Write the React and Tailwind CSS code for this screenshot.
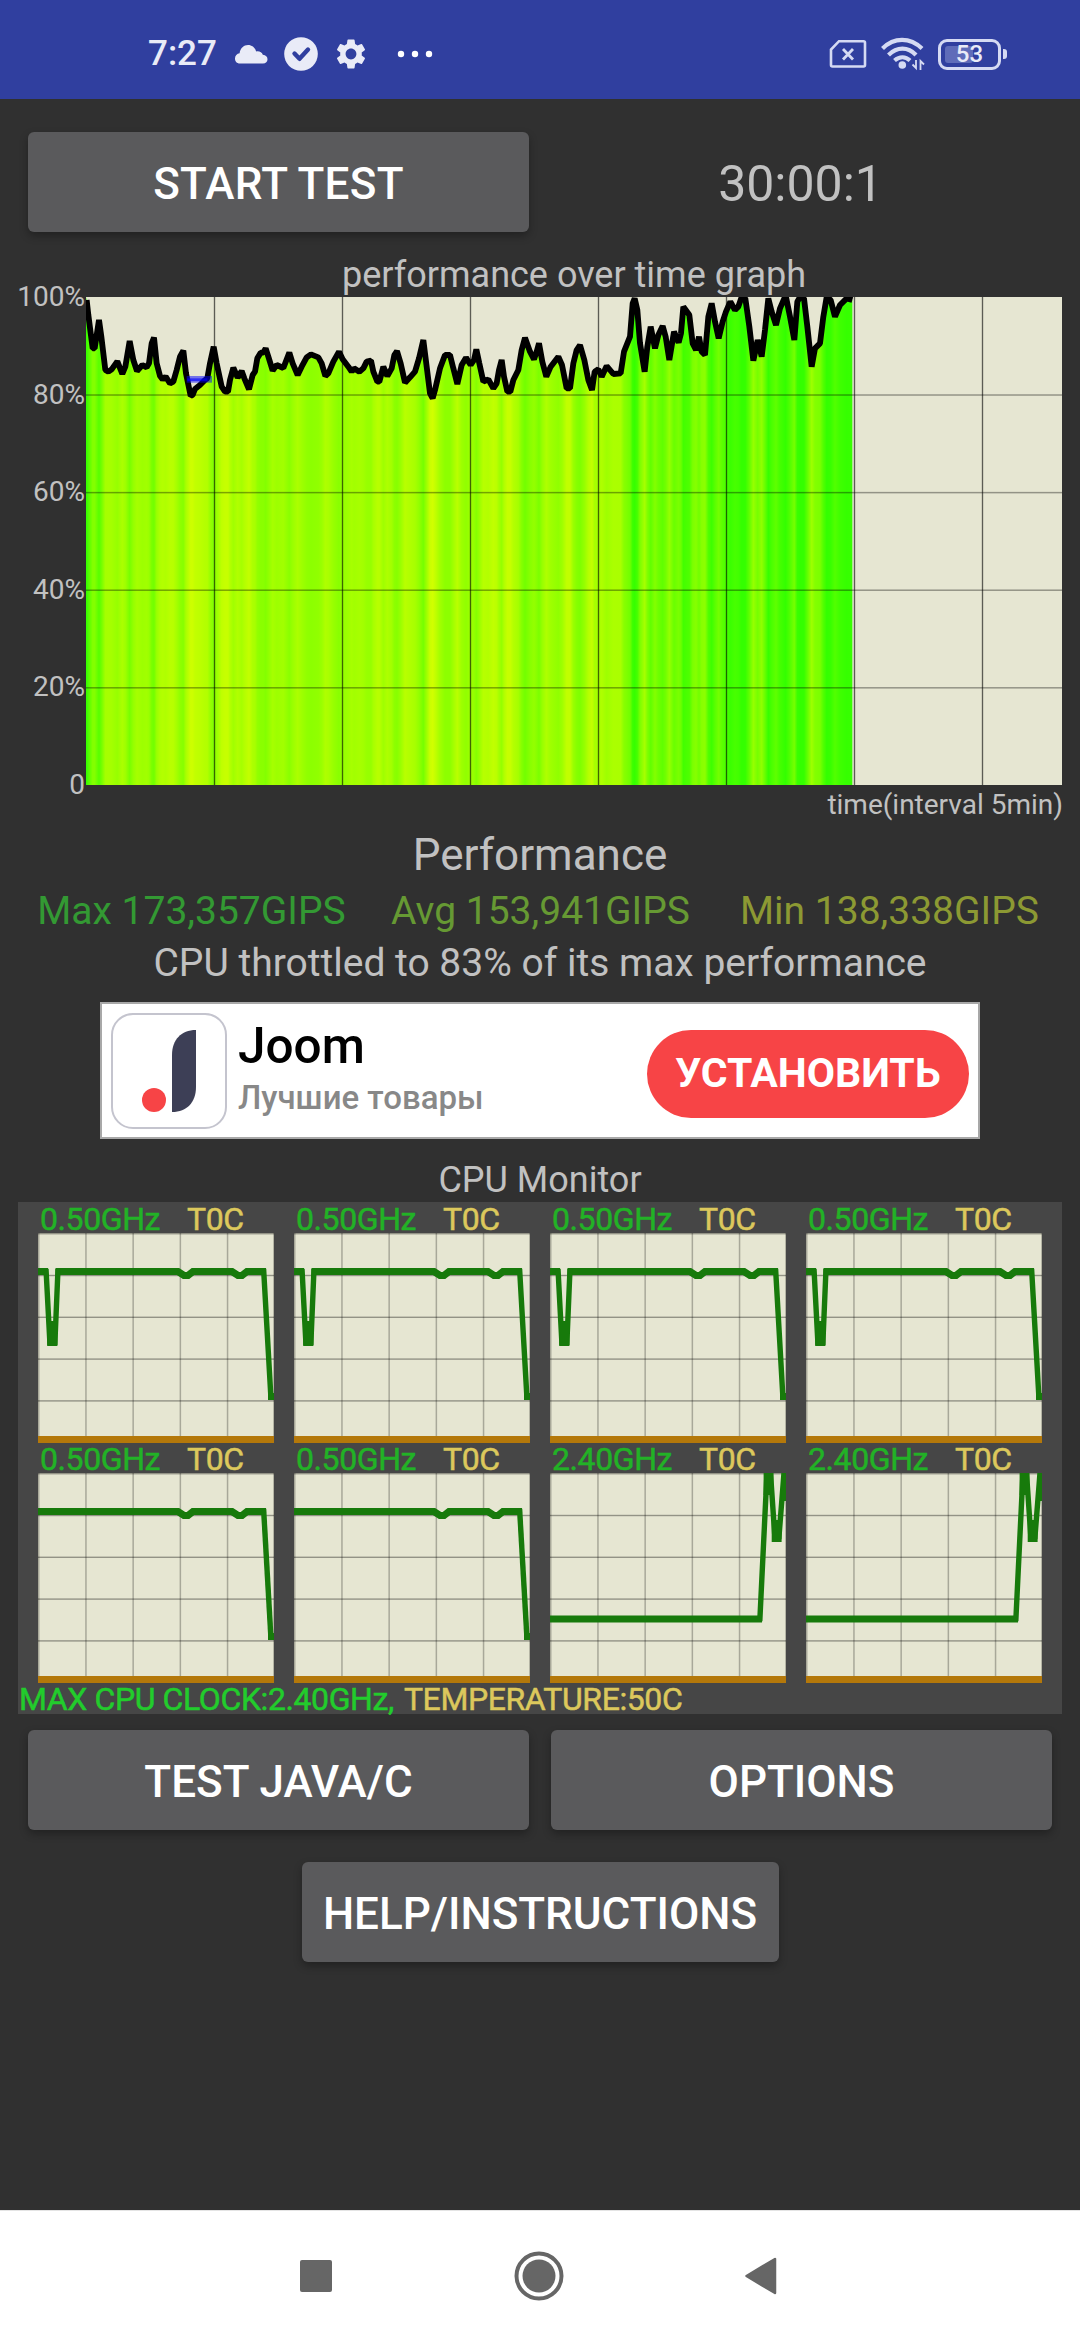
import React from 'react';
import { MdSettings } from 'react-icons/md';

// Performance samples, three units per pixel on both axes.
const SAMPLES = `2,9 7,54 20,154 26,154 39,69 46,119 58,219 67,224 77,217 94,193 109,231 118,209 131,132 142,189 153,222
169,204 182,211 189,199 197,139 204,122 212,199 222,237 230,247 239,239 252,259 262,254 272,219 282,179 292,161 300,229
314,297 320,294 327,276 342,264 357,249 364,244 372,199 383,149 392,199 407,269 417,284 426,284 432,249 442,212 455,242
467,222 475,244 489,277 500,234 507,224 514,184 524,167 532,167 539,154 547,179 560,221 572,204 592,213 610,167 620,199
635,234 647,209 662,181 675,172 697,181 707,199 718,237 727,229 742,194 759,164 770,187 787,209 797,224 804,214 820,224
832,214 842,194 855,191 862,224 874,254 880,254 892,209 904,237 917,214 925,174 933,162 944,199 957,257 972,241 987,224
999,184 1012,129 1022,209 1032,289 1040,304 1047,279 1062,214 1077,174 1092,174 1102,214 1114,261 1127,204 1140,182
1154,204 1164,189 1171,157 1180,199 1192,254 1207,247 1222,274 1232,259 1239,219 1247,189 1254,239 1264,284 1273,284
1282,249 1297,219 1307,159 1317,122 1332,164 1344,187 1352,164 1359,139 1369,194 1381,239 1394,209 1417,179 1428,204
1442,274 1452,274 1462,199 1472,159 1482,144 1495,189 1507,249 1518,279 1526,224 1537,217 1547,239 1562,207 1582,231
1604,229 1614,164 1632,119 1640,19 1646,4 1654,39 1662,139 1676,224 1684,149 1694,89 1707,154 1717,114 1730,87 1739,119
1750,189 1764,104 1778,137 1785,109 1792,29 1810,54 1820,139 1830,159 1839,119 1847,164 1857,174 1867,59 1877,19 1887,74
1898,124 1910,74 1920,44 1933,14 1947,39 1957,29 1967,0 1978,4 1990,89 2002,191 2015,129 2027,179 2037,99 2047,4 2057,44
2070,84 2082,34 2099,-5 2112,59 2125,129 2134,14 2142,0 2154,4 2164,89 2177,209 2187,154 2202,139 2212,59 2222,0 2234,9
2247,59 2262,24 2282,4 2299,9`
  .split(/\s+/)
  .map((pair) => pair.split(',').map(Number));

const END_X = 2299;

function heat(y) {
  const red = Math.round(51 + (Math.max(y, 0) / 1464) * 100 * 7.6);
  return `rgb(${Math.min(red, 255)},255,0)`;
}

function PerformanceChart() {
  const line = SAMPLES.map((p) => p.join(',')).join(' ');

  return (
    <svg className="block w-[976px] h-[488px] bg-[#e6e6d2]" viewBox="0 0 2928 1464">
      <defs>
        <linearGradient id="heat" gradientUnits="userSpaceOnUse" x1="0" y1="0" x2={END_X} y2="0">
          {SAMPLES.map(([x, y]) => (
            <stop key={x} offset={x / END_X} stopColor={heat(y)} />
          ))}
        </linearGradient>
      </defs>
      <polygon points={`0,0 ${line} ${END_X},1464 0,1464`} fill="url(#heat)" />
      <polyline points={line} fill="none" stroke="#000" strokeWidth="17.5" strokeLinejoin="bevel" />
      <rect x="302" y="237" width="76" height="20" fill="#0000ff" fillOpacity="0.5" />
      <rect x="304" y="244" width="60" height="8" fill="#0000ff" fillOpacity="0.6" />
      {[1, 2, 3, 4].map((i) => (
        <rect key={i} x="0" y={i * 292.8 - 1} width="2928" height="4.5" fillOpacity="0.36" />
      ))}
      {[1, 2, 3, 4, 5, 6, 7].map((i) => (
        <rect key={i} x={i * 384 - 0.5} y="0" width="4" height="1464" fillOpacity="0.6" />
      ))}
    </svg>
  );
}

const AXIS = ['100%', '80%', '60%', '40%', '20%', '0'];

const FLAT_TAIL = 'H140 L146,42.5 H150 L155,38.5 H194 L200,42.5 H204 L209,38.5 H228';

// "flat" strokes are drawn heavier than the steep ones.
const TRACES = {
  dip: {
    flat: `M0,38.5 H10 M17.5,38.5 ${FLAT_TAIL} M230,163.5 H236`,
    steep: 'M8,36 L12,112 M16.8,112 L20,36 M225.6,36 L233,166',
    blocks: [[9.2, 88, 10.2, 25]],
  },
  high: {
    flat: `M0,38.5 ${FLAT_TAIL} M230,163.5 H236`,
    steep: 'M225.6,36 L233,166',
    blocks: [],
  },
  burst: {
    flat: 'M0,146 H212',
    steep: 'M209.8,148 L217,0 M220.5,0 L225,66 M228.8,66 L234,0',
    blocks: [[213.6, 0, 9.8, 22], [221.7, 47, 9.9, 22], [231.8, 0, 4.2, 28]],
  },
};

const CORES = [
  { clock: '0.50GHz', trace: 'dip' },
  { clock: '0.50GHz', trace: 'dip' },
  { clock: '0.50GHz', trace: 'dip' },
  { clock: '0.50GHz', trace: 'dip' },
  { clock: '0.50GHz', trace: 'high' },
  { clock: '0.50GHz', trace: 'high' },
  { clock: '2.40GHz', trace: 'burst' },
  { clock: '2.40GHz', trace: 'burst' },
];

function Core({ clock, trace }) {
  const { flat, steep, blocks } = TRACES[trace];

  return (
    <div className="w-[236px] h-60">
      <div className="h-[31px] pt-[2px] pl-[2px] flex text-[32px] leading-[31px] tracking-[-0.4px] [-webkit-text-stroke:0.5px]">
        <span className="w-[147px] text-[#22b226]">{clock}</span>
        <span className="text-[#dcc85c]">T0C</span>
      </div>
      <svg className="block w-[236px] h-[210px] bg-[#e6e6d2]" viewBox="0 0 236 210">
        {[0, 47.2, 94.4, 141.6, 188.8, 235.2].map((x) => (
          <rect key={x} x={x} y="0" width="1.5" height="210" fill="#000" fillOpacity="0.27" />
        ))}
        {[0, 41.8, 83.6, 125.4, 167.2].map((y) => (
          <rect key={y} x="0" y={y} width="236" height="1.4" fill="#000" fillOpacity="0.36" />
        ))}
        <rect x="0" y="203" width="236" height="7" fill="#b4780a" />
        <path d={flat} fill="none" stroke="#177a0b" strokeWidth="7.2" />
        <path d={steep} fill="none" stroke="#177a0b" strokeWidth="5.4" />
        {blocks.map(([x, y, w, h]) => (
          <rect key={x} x={x} y={y} width={w} height={h} fill="#177a0b" />
        ))}
      </svg>
    </div>
  );
}

function StatusBar() {
  return (
    <div className="h-[99px] bg-[#303f9f] flex items-center pl-[148px] pr-[73px] text-[#e9ebf7] shrink-0">
      <div className="h-[34px] mt-[8px] flex items-center flex-1">
        <span className="w-[72px] text-[35px] leading-[34px] font-medium">7:27</span>
        <svg className="ml-[14px] w-[34px] h-[20px]" viewBox="0 0 34 20">
          <path d="M6 19.500C2.600 19.500 1 17.200 1 14.500c0-3 2-5 4.600-5.300C6.400 4 9.800 1 14 1c4 0 7 2.500 8.200 6.400 3.200-.6 5.800 1 6.600 3.400 3 .3 4.700 2 4.700 4.500 0 2.600-1.700 4.200-4.500 4.200z" fill="currentColor" />
        </svg>
        <svg className="ml-[16px] w-[34px] h-[34px]" viewBox="0 0 34 34">
          <circle cx="17" cy="17" r="16.800" fill="currentColor" />
          <path d="M10.500 16.500l5 5.300 8.500-9.300" fill="none" stroke="#303f9f" strokeWidth="4.400" strokeLinecap="round" strokeLinejoin="round" />
        </svg>
        <MdSettings className="ml-[15px] w-[36px] h-[36px]" />
        <svg className="ml-[28px] w-[36px] h-[8px]" viewBox="0 0 36 8">
          <circle cx="4" cy="4" r="3.200" fill="#fff" />
          <circle cx="18" cy="4" r="3.200" fill="#fff" />
          <circle cx="32" cy="4" r="3.200" fill="#fff" />
        </svg>
      </div>
      <div className="mt-[9px] flex items-center text-[#d5daf3]">
        <svg className="w-[38px] h-[30px]" viewBox="0 0 38 30">
          <path d="M10 2.200H34.500a1.500 1.500 0 0 1 1.500 1.500V26a1.500 1.500 0 0 1-1.500 1.500H3.500A1.500 1.500 0 0 1 2 26V10.500z" fill="none" stroke="currentColor" strokeWidth="2.600" />
          <path d="M14 10l10 10.500M24 10l-10 10.500" stroke="currentColor" strokeWidth="2.800" />
        </svg>
        <svg className="ml-[14px] w-[44px] h-[34px]" viewBox="0 0 44 34">
          <g fill="none" stroke="currentColor" strokeWidth="4.200">
            <path d="M1.500 11.500C13 0 29 0 41 11.500" />
            <path d="M7.500 18C16 9.600 27 9.600 35 18" />
            <path d="M13.500 23.500c5-4.300 11-4.300 15.500 0" />
          </g>
          <circle cx="21.300" cy="28" r="3.800" fill="currentColor" />
          <path d="M35 23v8l-3.500-3.500M39.500 33v-9l3.500 3.500" fill="none" stroke="currentColor" strokeWidth="1.800" />
        </svg>
        <div className="ml-[13px] w-[63px] h-[31px] p-[4px] border-[3.5px] border-[#d5daf3] rounded-[9px] relative">
          <div className="w-[28px] h-full bg-[#5f6cb9] rounded-[3px]" />
          <span className="absolute inset-0 text-center text-[24px] leading-[25px] font-medium text-[#e9ebf7]">53</span>
        </div>
        <div className="ml-[2px] w-[4px] h-[10px] bg-[#d5daf3] rounded-r-[3px]" />
      </div>
    </div>
  );
}

function Button({ className, children }) {
  return (
    <button
      className={`h-[100px] pt-[3px] bg-[#5a5a5c] rounded-[6px] text-white text-[44px] font-medium whitespace-nowrap shadow-[0_4px_8px_rgba(0,0,0,0.3)] ${className}`}
    >
      {children}
    </button>
  );
}

function AdBanner() {
  return (
    <div className="mt-3 mx-auto w-[880px] h-[137px] bg-white border-2 border-[#a8a8a8] flex items-center pl-[9px] pr-[9px]">
      <svg className="w-[116px] h-[116px] shrink-0" viewBox="0 0 116 116">
        <rect x="1" y="1" width="114" height="114" rx="21" fill="#fff" stroke="#c4c4ce" strokeWidth="2" />
        <path d="M85 17v57c0 15-9 25-24 25V42c0-15 9-25 24-25z" fill="#3d3f56" />
        <circle cx="43" cy="87" r="12" fill="#f74446" />
      </svg>
      <div className="ml-[11px] mb-[4px] flex-1 flex flex-col">
        <span className="text-[49.5px] leading-[56px] font-medium text-black">Joom</span>
        <span className="mt-[2px] text-[33px] leading-[44px] font-medium text-[#888888]">Лучшие товары</span>
      </div>
      <div className="w-[322px] h-[88px] mt-[6px] rounded-full bg-[#f74446] text-white text-[41px] leading-[86px] font-bold text-center">
        УСТАНОВИТЬ
      </div>
    </div>
  );
}

function NavBar() {
  return (
    <div className="mt-auto h-[130px] bg-white border-t border-[#e4e4e4] flex items-center text-[#666666] shrink-0">
      <div className="ml-[300px] w-8 h-8 bg-[#666666] rounded-[2px]" />
      <svg className="ml-[182px] w-[50px] h-[50px]" viewBox="0 0 50 50">
        <circle cx="25" cy="25" r="22.500" fill="none" stroke="currentColor" strokeWidth="4" />
        <circle cx="25" cy="25" r="16.500" fill="currentColor" />
      </svg>
      <svg className="ml-[180px] w-[33px] h-[38px]" viewBox="0 0 33 38">
        <path d="M2.500 19L31 2v34z" fill="currentColor" stroke="currentColor" strokeWidth="2.500" strokeLinejoin="round" />
      </svg>
    </div>
  );
}

export default function App() {
  return (
    <div className="w-[1080px] h-[2340px] bg-[#303030] text-[#c1c1c1] font-[Roboto,sans-serif] flex flex-col overflow-hidden">
      <StatusBar />

      <div className="mt-[33px] h-[100px] px-7 flex items-center">
        <Button className="w-[501px] tracking-[0.3px]">START TEST</Button>
        <span className="flex-1 pt-[3px] pl-[20px] text-center text-[50px] leading-[100px]">30:00:1</span>
      </div>

      {/* Performance graph */}
      <div className="mt-[21px] h-[44px] pl-[68px] text-center text-[36px] leading-[44px]">performance over time graph</div>
      <div className="flex">
        <div className="w-[86px] h-[488px] pr-[1px] flex flex-col justify-between text-right text-[28px]">
          {AXIS.map((label) => (
            <div key={label} className="h-0 leading-[0px]">{label}</div>
          ))}
        </div>
        <PerformanceChart />
      </div>
      <div className="h-10 pr-[17px] text-right text-[28px] leading-[40px]">time(interval 5min)</div>

      {/* Results */}
      <div className="h-[60px] text-center text-[44px] leading-[60px]">Performance</div>
      <div className="h-[52px] pl-[17px] pr-[16px] grid grid-cols-3 text-center text-[39px] leading-[52px]">
        <span className="text-[#339933]">Max 173,357GIPS</span>
        <span className="text-[#669933]">Avg 153,941GIPS</span>
        <span className="text-[#8c9933]">Min 138,338GIPS</span>
      </div>
      <div className="h-[53px] text-center text-[39px] leading-[53px]">CPU throttled to 83% of its max performance</div>

      <AdBanner />

      {/* CPU monitor */}
      <div className="mt-5 h-[43px] text-center text-[36px] leading-[43px]">CPU Monitor</div>
      <div className="mx-[18px] h-[512px] bg-[#464646]">
        <div className="pl-5 grid w-[1044px] [grid-template-columns:repeat(4,256px)]">
          {CORES.map((core, i) => (
            <Core key={i} {...core} />
          ))}
        </div>
        <div className="h-8 pl-[1px] flex gap-[10px] text-[32px] leading-[35px] tracking-[-0.4px] [-webkit-text-stroke:0.5px]">
          <span className="text-[#22cc2c]">MAX CPU CLOCK:2.40GHz,</span>
          <span className="text-[#dcc85c]">TEMPERATURE:50C</span>
        </div>
      </div>

      <div className="mt-4 px-7 flex justify-between">
        <Button className="w-[501px]">TEST JAVA/C</Button>
        <Button className="w-[501px]">OPTIONS</Button>
      </div>
      <Button className="mt-8 mx-auto w-[477px]">HELP/INSTRUCTIONS</Button>

      <NavBar />
    </div>
  );
}
